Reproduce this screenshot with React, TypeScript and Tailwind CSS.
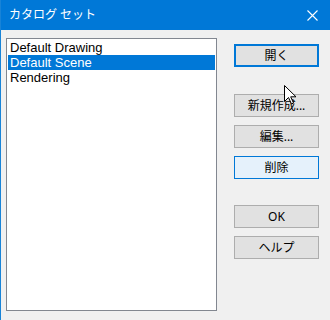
import React from "react";

const items = ["Default Drawing", "Default Scene", "Rendering"];

function Btn({ label, kind }: { label: string; kind?: "default" | "hover" }) {
  const cls =
    kind === "default"
      ? "border-2 border-[#0078d7] bg-[#e1e1e1]"
      : kind === "hover"
      ? "border border-[#0078d7] bg-[#e5f1fb]"
      : "border border-[#adadad] bg-[#e1e1e1]";
  return (
    <div
      className={`w-[85px] h-[23px] flex items-center justify-center text-[12px] text-black ${cls}`}
    >
      {label}
    </div>
  );
}

export default function App() {
  return (
    <div
      className="relative w-[330px] h-[320px] bg-[#f0f0f0] border-l border-[#1883d7] overflow-hidden"
      style={{ fontFamily: '"Noto Sans", "Noto Sans CJK JP", sans-serif' }}
    >
      <div className="h-[30px] bg-[#0078d7] flex items-center justify-between pl-[8px] pr-[12px] text-white">
        <span className="text-[12px]">カタログ セット</span>
        <svg width="11" height="11" viewBox="0 0 11 11">
          <path d="M0.5 0.5 L10.5 10.5 M10.5 0.5 L0.5 10.5" stroke="#fff" strokeWidth="1.1" />
        </svg>
      </div>

      <div className="flex">
        <div className="ml-[5px] mt-[8px] w-[211px] h-[273px] bg-white border border-[#828790] p-px">
          {items.map((it, i) => (
            <div
              key={it}
              className={`h-[15px] leading-[15px] pl-[2px] text-[13px] font-['Liberation_Sans',sans-serif] ${
                i === 1 ? "bg-[#0078d7] text-white" : "text-black"
              }`}
            >
              {it}
            </div>
          ))}
        </div>

        <div className="ml-[17px] mt-[14px] flex flex-col">
          <Btn label="開く" kind="default" />
          <div className="mt-[27px] flex flex-col gap-[8px]">
            <Btn label="新規作成..." />
            <Btn label="編集..." />
            <Btn label="削除" kind="hover" />
          </div>
          <div className="mt-[26px] flex flex-col gap-[8px]">
            <Btn label="OK" />
            <Btn label="ヘルプ" />
          </div>
        </div>
      </div>

      <svg
        className="absolute left-[283px] top-[85px]"
        width="13"
        height="20"
        viewBox="0 0 13 20"
      >
        <path
          d="M0.5 0.5 L0.5 16.5 L4.5 12.5 L7.5 19 L9.5 18 L6.7 11.8 L12 11.8 Z"
          fill="#fff"
          stroke="#000"
          strokeWidth="1"
          strokeLinejoin="miter"
        />
      </svg>
    </div>
  );
}
